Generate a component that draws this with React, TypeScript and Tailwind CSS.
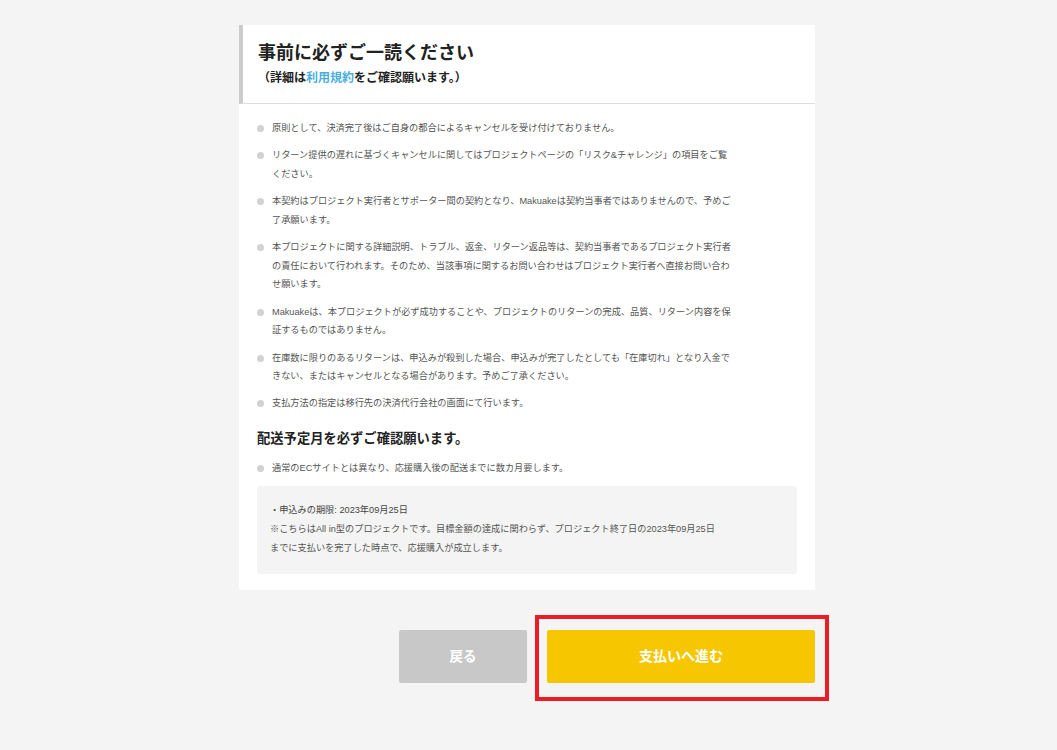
import React from 'react';

const notes: string[][] = [
  ['原則として、決済完了後はご自身の都合によるキャンセルを受け付けておりません。'],
  [
    'リターン提供の遅れに基づくキャンセルに関してはプロジェクトページの「リスク&チャレンジ」の項目をご覧',
    'ください。',
  ],
  [
    '本契約はプロジェクト実行者とサポーター間の契約となり、Makuakeは契約当事者ではありませんので、予めご',
    '了承願います。',
  ],
  [
    '本プロジェクトに関する詳細説明、トラブル、返金、リターン返品等は、契約当事者であるプロジェクト実行者',
    'の責任において行われます。そのため、当該事項に関するお問い合わせはプロジェクト実行者へ直接お問い合わ',
    'せ願います。',
  ],
  [
    'Makuakeは、本プロジェクトが必ず成功することや、プロジェクトのリターンの完成、品質、リターン内容を保',
    '証するものではありません。',
  ],
  [
    '在庫数に限りのあるリターンは、申込みが殺到した場合、申込みが完了したとしても「在庫切れ」となり入金で',
    'きない、またはキャンセルとなる場合があります。予めご了承ください。',
  ],
  ['支払方法の指定は移行先の決済代行会社の画面にて行います。'],
];

function Note({ lines }: { lines: string[] }) {
  return (
    <li className="flex items-start mb-[8.5px]">
      <span className="mt-[6px] mr-[8px] w-[7px] h-[7px] rounded-full bg-[#d2d2d2] shrink-0" />
      <div className="text-[9.2px] leading-[18.7px] text-[#555]">
        {lines.map((l, i) => (
          <span key={i} className="block whitespace-nowrap">
            {l}
          </span>
        ))}
      </div>
    </li>
  );
}

export default function App() {
  return (
    <div className="min-h-screen bg-[#f4f4f4] pt-[25px] font-['Liberation_Sans','Noto_Sans_CJK_JP',sans-serif]">
      <div className="ml-[239px] w-[576px]">
        <div className="bg-white pb-[16px]">
          <div className="border-l-4 border-[#cccccc] border-b border-b-[#dddddd] pl-[15px] pt-[15px] pb-[14px]">
            <h1 className="text-[18px] leading-[26px] font-bold text-[#222]">事前に必ずご一読ください</h1>
            <p className="mt-[1px] text-[12px] leading-[22px] font-bold text-[#222]">
              （詳細は<span className="text-[#4aaee0]">利用規約</span>をご確認願います。）
            </p>
          </div>

          <div className="px-[18px] pt-[15px]">
            <ul>
              {notes.map((lines, i) => (
                <Note key={i} lines={lines} />
              ))}
            </ul>

            <h2 className="mt-[16px] mb-[10px] text-[13.3px] leading-[20px] font-bold text-[#222]">
              配送予定月を必ずご確認願います。
            </h2>
            <ul>
              <Note lines={['通常のECサイトとは異なり、応援購入後の配送までに数カ月要します。']} />
            </ul>

            <div className="mt-[2px] rounded-[3px] bg-[#f4f4f4] pl-[13px] pt-[15px] pb-[17px] text-[9.2px] leading-[18.7px] text-[#444]">
              <span className="block whitespace-nowrap">・申込みの期限: 2023年09月25日</span>
              <span className="block whitespace-nowrap text-[#555]">
                ※こちらはAll in型のプロジェクトです。目標金額の達成に関わらず、プロジェクト終了日の2023年09月25日
              </span>
              <span className="block whitespace-nowrap text-[#555]">
                までに支払いを完了した時点で、応援購入が成立します。
              </span>
            </div>
          </div>
        </div>

        <div className="mt-[40px] flex justify-end gap-[20px]">
          <button className="w-[128px] h-[53px] rounded-[2px] bg-[#c8c8c8] text-white text-[13.5px] font-bold">
            戻る
          </button>
          <div className="relative">
            <button className="w-[268px] h-[53px] rounded-[2px] bg-[#f6c600] text-white text-[14px] font-bold">
              支払いへ進む
            </button>
            <div className="absolute -left-[12px] -right-[14px] -top-[15px] -bottom-[18px] border-4 border-[#ed1c24] pointer-events-none" />
          </div>
        </div>
      </div>
    </div>
  );
}
